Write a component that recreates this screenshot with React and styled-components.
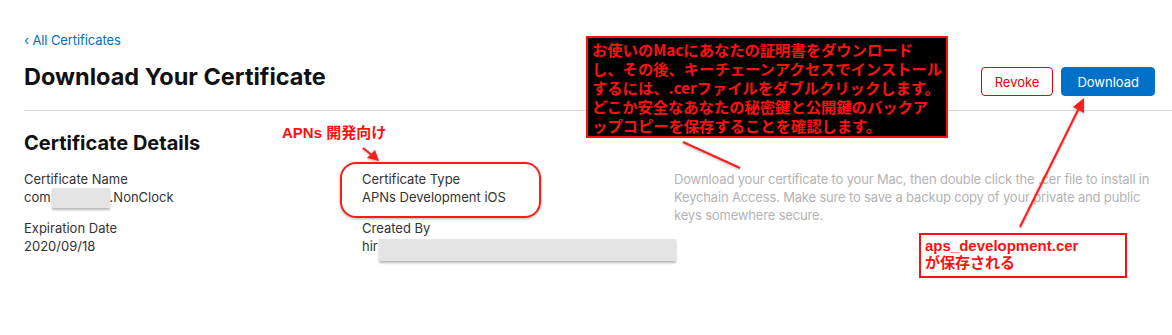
import React from 'react';
import styled, { createGlobalStyle } from 'styled-components';

const GlobalStyle = createGlobalStyle`
  html, body {
    margin: 0;
    background: #fff;
  }
  body {
    font-family: Inter, "Liberation Sans", Arial, sans-serif;
    color: #1d1d1f;
    -webkit-font-smoothing: antialiased;
  }
`;

const Page = styled.div`
  position: relative;
  width: 1172px;
  height: 335px;
  overflow: hidden;
  padding: 31px 17px 0 24px;
  box-sizing: border-box;
`;

const BackLink = styled.a`
  display: block;
  font-size: 13px;
  line-height: 18px;
  color: #0070c9;
  text-decoration: none;
  letter-spacing: -0.1px;
`;

const HeaderRow = styled.div`
  display: flex;
  align-items: flex-start;
  justify-content: space-between;
  margin-top: 18px;
`;

const Title = styled.h1`
  margin: -4px 0 0;
  font-size: 23.5px;
  line-height: 28px;
  font-weight: 700;
  color: #111;
`;

const Actions = styled.div`
  display: flex;
  gap: 8px;
`;

const Button = styled.button`
  height: 29px;
  padding: 0 ${({ $primary }) => ($primary ? '15px' : '13px')};
  border-radius: 4px;
  font-family: inherit;
  font-size: 13px;
  border: 1px solid ${({ $primary }) => ($primary ? '#0070c9' : '#e30000')};
  background: ${({ $primary }) => ($primary ? '#0070c9' : '#fff')};
  color: ${({ $primary }) => ($primary ? '#fff' : '#e30000')};
  cursor: pointer;
`;

const Divider = styled.hr`
  margin: 14px -17px 0 0;
  border: 0;
  border-top: 1px solid #d6d6d6;
`;

const SectionTitle = styled.h2`
  margin: 20px 0 0;
  font-size: 20px;
  line-height: 24px;
  font-weight: 700;
  color: #111;
`;

const DetailsGrid = styled.div`
  display: grid;
  grid-template-columns: 338px 312px 1fr;
  margin-top: 15px;
`;

const Column = styled.div`
  display: flex;
  flex-direction: column;
  gap: 13px;
`;

const Field = styled.div`
  font-size: 13px;
  line-height: 18px;
  color: #333;
`;

const Label = styled.div`
  color: #333;
`;

const Value = styled.div`
  color: #333;
  white-space: nowrap;
`;

/* grey blur box laid over a hidden part of a value */
const Redacted = styled.span`
  display: inline-block;
  position: relative;
  width: ${({ $w }) => $w}px;
  height: 0;
  margin-left: ${({ $ml }) => $ml || 0}px;

  &::after {
    content: '';
    position: absolute;
    left: 0;
    right: 0;
    top: ${({ $top }) => $top}px;
    height: ${({ $h }) => $h}px;
    background: #e4e4e4;
    box-shadow: 0 2px 2px rgba(0, 0, 0, 0.28);
  }
`;

const Description = styled.p`
  margin: 0;
  font-size: 13px;
  line-height: 18px;
  color: #b3b3b3;
  white-space: nowrap;
  letter-spacing: -0.17px;
`;

/* annotations drawn over the screenshot */

const Note = styled.div`
  position: absolute;
  left: ${({ $x }) => $x}px;
  top: ${({ $y }) => $y}px;
  font-family: "Liberation Sans", "Noto Sans CJK JP", sans-serif;
  font-weight: 700;
  color: #ff1010;
  white-space: nowrap;
`;

const BlackNote = styled(Note)`
  width: 362px;
  height: 102px;
  padding: 2px 0 0 4px;
  box-sizing: border-box;
  background: #000;
  border: 2px solid #ff1010;
  font-family: "Noto Sans CJK JP", sans-serif;
  font-size: 15.3px;
  line-height: 19px;
`;

const Tag = styled(Note)`
  font-size: 15px;
  line-height: 18px;
`;

const FileNote = styled(Note)`
  width: 208px;
  height: 45px;
  padding: 2px 0 0 4px;
  box-sizing: border-box;
  background: #fff;
  border: 2px solid #ff1010;
  font-size: 15px;
  line-height: 17px;
`;

const Ring = styled.div`
  position: absolute;
  left: 340px;
  top: 162px;
  width: 201px;
  height: 56px;
  box-sizing: border-box;
  border: 2px solid #ff1a1a;
  border-radius: 16px;
  box-shadow: 0 1px 3px rgba(0, 0, 0, 0.3);
`;

const Overlay = styled.svg`
  position: absolute;
  left: 0;
  top: 0;
  pointer-events: none;
`;

export default function App() {
  return (
    <>
      <GlobalStyle />
      <Page>
        <BackLink href="#">‹ All Certificates</BackLink>
        <HeaderRow>
          <Title>Download Your Certificate</Title>
          <Actions>
            <Button>Revoke</Button>
            <Button $primary>Download</Button>
          </Actions>
        </HeaderRow>
        <Divider />
        <SectionTitle>Certificate Details</SectionTitle>
        <DetailsGrid>
          <Column>
            <Field>
              <Label>Certificate Name</Label>
              <Value>
                com<Redacted $w={58} $h={20} $top={-14} $ml={1} />.NonClock
              </Value>
            </Field>
            <Field>
              <Label>Expiration Date</Label>
              <Value>2020/09/18</Value>
            </Field>
          </Column>
          <Column>
            <Field>
              <Label>Certificate Type</Label>
              <Value>APNs Development iOS</Value>
            </Field>
            <Field>
              <Label>Created By</Label>
              <Value>
                hir<Redacted $w={297} $h={22} $top={-12} $ml={1} />
              </Value>
            </Field>
          </Column>
          <Description>
            Download your certificate to your Mac, then double click the .cer file to install in
            <br />
            Keychain Access. Make sure to save a backup copy of your private and public
            <br />
            keys somewhere secure.
          </Description>
        </DetailsGrid>

        <BlackNote $x={586} $y={36}>
          お使いのMacにあなたの証明書をダウンロード
          <br />
          し、その後、キーチェーンアクセスでインストール
          <br />
          するには、.cerファイルをダブルクリックします。
          <br />
          どこか安全なあなたの秘密鍵と公開鍵のバックア
          <br />
          ップコピーを保存することを確認します。
        </BlackNote>

        <Tag $x={282} $y={124}>APNs 開発向け</Tag>
        <Ring />

        <FileNote $x={919} $y={233}>
          aps_development.cer
          <br />
          が保存される
        </FileNote>

        <Overlay width="1172" height="335" viewBox="0 0 1172 335">
          <defs>
            <filter id="sh" x="-20%" y="-20%" width="140%" height="140%">
              <feDropShadow dx="0" dy="1" stdDeviation="1" floodColor="#000" floodOpacity="0.3" />
            </filter>
          </defs>
          <g stroke="#ff1a1a" fill="#ff1a1a" strokeWidth="2" filter="url(#sh)">
            <line x1="683" y1="142" x2="740" y2="168" />
            <line x1="363" y1="148" x2="373" y2="156" />
            <polygon points="379,161 367,158 375,150" stroke="none" />
            <line x1="1020" y1="227" x2="1079" y2="108" />
            <polygon points="1084,98 1084,113 1073,107" stroke="none" />
          </g>
        </Overlay>
      </Page>
    </>
  );
}
